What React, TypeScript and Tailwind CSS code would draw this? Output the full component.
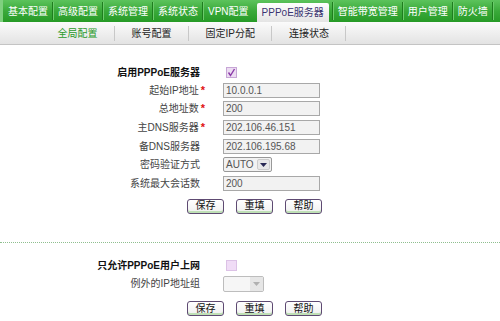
import React from 'react'

const tabs = ['基本配置', '高级配置', '系统管理', '系统状态', 'VPN配置', 'PPPoE服务器', '智能带宽管理', '用户管理', '防火墙']
const subs = ['全局配置', '账号配置', '固定IP分配', '连接状态']

function Sep() {
  return <span className="w-[2px] h-[18px] shrink-0 self-center border-l border-l-[#1f7d1f] border-r border-r-[#6ccb6c]" />
}

function Row({ label, req, children }: { label: string; req?: boolean; children: React.ReactNode }) {
  return (
    <div className="flex items-center h-[18.6px]">
      <div className="w-[200px] flex justify-end items-center text-[#444]">
        {label}
        {req && <span className="ml-[2px] -mr-[5px] text-[11px] font-bold text-[#e01010] leading-none">*</span>}
      </div>
      <div className="ml-[23px] flex items-center">{children}</div>
    </div>
  )
}

function TextBox({ value }: { value: string }) {
  return (
    <input
      readOnly
      value={value}
      className="w-[97px] h-[15px] border border-[#a8a8a8] bg-[#f2f2f2] text-[#555] text-[10px] px-[2px] outline-none"
    />
  )
}

function Buttons() {
  return (
    <div className="flex pl-[187px] gap-[12px]">
      {['保存', '重填', '帮助'].map((b) => (
        <button
          key={b}
          className="w-[37px] h-[15px] rounded-[3px] border border-[#5e4a72] bg-gradient-to-b from-white to-[#efefef] shadow-[inset_0_-2px_0_#bfe0b6] text-[10px] text-[#111] leading-none"
        >
          {b}
        </button>
      ))}
    </div>
  )
}

function Check({ checked }: { checked?: boolean }) {
  return (
    <span
      className={`w-[11px] h-[11px] flex items-center justify-center border ${
        checked ? 'bg-[#ecdcf2] border-[#c7a6d6]' : 'bg-[#f0dcf6] border-[#dcc2e6]'
      }`}
    >
      {checked && (
        <svg width="9" height="9" viewBox="0 0 9 9">
          <path d="M1.5 4.5 L3.5 7.5 L7.5 1" fill="none" stroke="#8a3aa8" strokeWidth="1.4" />
        </svg>
      )}
    </span>
  )
}

export default function App() {
  return (
    <div className="w-[500px] h-[321px] overflow-hidden bg-white text-[10px] font-['Liberation_Sans','Noto_Sans_CJK_SC',sans-serif]">
      <nav className="h-[22px] flex items-end overflow-hidden bg-gradient-to-b from-[#5cc35c] via-[#3aaa3a] to-[#269a26] pl-[1px] border-l-[3px] border-l-[#7fd07f]">
        {tabs.map((t, i) => (
          <React.Fragment key={t}>
            {t === 'PPPoE服务器' ? (
              <span className="h-[19px] shrink-0 whitespace-nowrap ml-[4px] mr-[3px] px-[5px] flex items-center rounded-t-[2px] bg-gradient-to-b from-white to-[#e4e4e4] text-[#3a3470]">
                {t}
              </span>
            ) : (
              <span className="h-[22px] shrink-0 px-[4px] flex items-center text-white whitespace-nowrap">{t}</span>
            )}
            {t !== 'VPN配置' && <Sep />}
          </React.Fragment>
        ))}
      </nav>
      <div className="h-[23px] flex items-center pl-[41px] bg-gradient-to-b from-[#fbfbfb] to-[#e3e3e3] border-b border-[#c4c4c4]">
        {subs.map((s, i) => (
          <span
            key={s}
            className={`h-[15px] px-[16.5px] flex items-center ${i === 0 ? 'text-[#2a9a2a]' : 'text-[#222]'} ${
              i > 0 ? 'border-l border-[#c8c8c8]' : ''
            } ${i === subs.length - 1 ? 'border-r' : ''}`}
          >
            {s}
          </span>
        ))}
      </div>

      <div className="pt-[18px]">
        <div className="flex items-center h-[18px]">
          <div className="w-[200px] text-right font-bold text-[#111]">启用PPPoE服务器</div>
          <div className="ml-[26px]">
            <Check checked />
          </div>
        </div>
        <Row label="起始IP地址" req>
          <TextBox value="10.0.0.1" />
        </Row>
        <Row label="总地址数" req>
          <TextBox value="200" />
        </Row>
        <Row label="主DNS服务器" req>
          <TextBox value="202.106.46.151" />
        </Row>
        <Row label="备DNS服务器">
          <TextBox value="202.106.195.68" />
        </Row>
        <Row label="密码验证方式">
          <div className="w-[49px] h-[15px] flex items-center border border-[#999] rounded-[2px] bg-[#f2f2f2] text-[#555]">
            <span className="flex-1 pl-[2px]">AUTO</span>
            <span className="w-[13px] h-[11px] mr-[1px] flex items-center justify-center bg-[#e8e8e8] border border-[#ccc] rounded-[2px]">
              <svg width="7" height="4" viewBox="0 0 7 4">
                <path d="M0 0 H7 L3.5 4 Z" fill="#2a2a55" />
              </svg>
            </span>
          </div>
        </Row>
        <Row label="系统最大会话数">
          <TextBox value="200" />
        </Row>
        <div className="mt-[6px]">
          <Buttons />
        </div>

        <div className="mt-[28px] border-t border-dotted border-[#8fbf8f]" />

        <div className="mt-[14px] flex items-center h-[18px]">
          <div className="w-[200px] text-right font-bold text-[#111]">只允许PPPoE用户上网</div>
          <div className="ml-[26px]">
            <Check />
          </div>
        </div>
        <Row label="例外的IP地址组">
          <div className="w-[41px] h-[16px] flex items-center border border-[#bdbdbd] rounded-[2px] bg-[#f6f6f6]">
            <span className="flex-1" />
            <span className="w-[13px] h-[14px] flex items-center justify-center bg-[#e6e6e6]">
              <svg width="7" height="4" viewBox="0 0 7 4">
                <path d="M0 0 H7 L3.5 4 Z" fill="#b0b0b0" />
              </svg>
            </span>
          </div>
        </Row>
        <div className="mt-[8px]">
          <Buttons />
        </div>
      </div>
    </div>
  )
}
